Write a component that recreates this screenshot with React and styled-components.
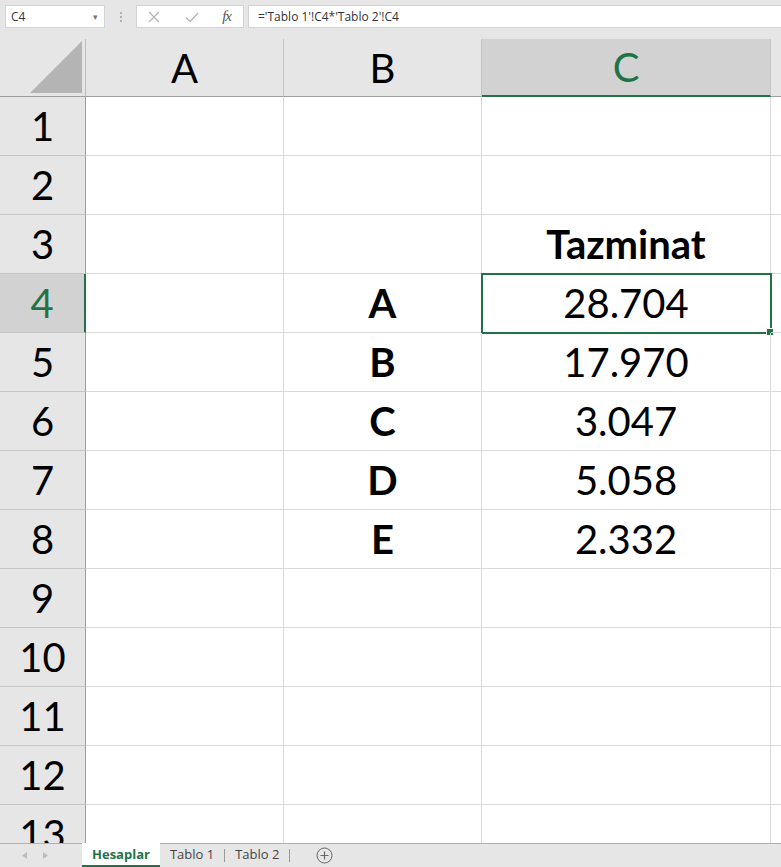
import React from 'react'
import styled, { createGlobalStyle } from 'styled-components'

const GREEN = '#217346'

const columns = ['A', 'B', 'C', 'D']

const rows = [
    ['', '', ''],
    ['', '', ''],
    ['', '', 'Tazminat'],
    ['', 'A', '28.704'],
    ['', 'B', '17.970'],
    ['', 'C', '3.047'],
    ['', 'D', '5.058'],
    ['', 'E', '2.332'],
    ['', '', ''],
    ['', '', ''],
    ['', '', ''],
    ['', '', ''],
    ['', '', ''],
]

const App = () => {
    return (
        <Page>
            <GlobalStyle />
            <FormulaBar>
                <NameBox>
                    <span>C4</span>
                    <Caret>▾</Caret>
                </NameBox>
                <Grip>
                    <i /><i /><i />
                </Grip>
                <FxBox>
                    <svg width="14" height="14" viewBox="0 0 14 14">
                        <path d="M2 2 L12 12 M12 2 L2 12" stroke="#b5b5b5" strokeWidth="1.3" fill="none" />
                    </svg>
                    <svg width="16" height="14" viewBox="0 0 16 14">
                        <path d="M2 7.5 L6 11.5 L14 3" stroke="#b5b5b5" strokeWidth="1.4" fill="none" />
                    </svg>
                    <Fx>fx</Fx>
                </FxBox>
                <FormulaInput>='Tablo 1'!C4*'Tablo 2'!C4</FormulaInput>
            </FormulaBar>

            <SheetArea>
                <Grid>
                    <Corner>
                        <svg width="52" height="52" viewBox="0 0 52 52">
                            <polygon points="52,0 52,52 0,52" fill="#b4b4b4" />
                        </svg>
                    </Corner>
                    {columns.map((c) => (
                        <ColHeader key={c} $active={c === 'C'} $last={c === 'D'}>
                            {c === 'D' ? '' : c}
                        </ColHeader>
                    ))}
                    {rows.map((r, i) => (
                        <React.Fragment key={i}>
                            <RowHeader $active={i === 3}>{i + 1}</RowHeader>
                            <Cell>{r[0]}</Cell>
                            <Cell $bold>{r[1]}</Cell>
                            <Cell $bold={i === 2} $selected={i === 3}>{r[2]}</Cell>
                            <Cell />
                        </React.Fragment>
                    ))}
                </Grid>
            </SheetArea>

            <TabBar>
                <Arrows>
                    <svg width="5" height="7" viewBox="0 0 5 7">
                        <polygon points="5,0 5,7 0,3.5" fill="#bdbdbd" />
                    </svg>
                    <svg width="5" height="7" viewBox="0 0 5 7">
                        <polygon points="0,0 0,7 5,3.5" fill="#bdbdbd" />
                    </svg>
                </Arrows>
                <Tab $active>Hesaplar</Tab>
                <Tab>Tablo 1</Tab>
                <Sep />
                <Tab>Tablo 2</Tab>
                <Sep />
                <AddButton>
                    <svg width="17" height="17" viewBox="0 0 17 17">
                        <circle cx="8.5" cy="8.5" r="7.5" stroke="#666" strokeWidth="1" fill="none" />
                        <path d="M8.5 4.5 V12.5 M4.5 8.5 H12.5" stroke="#666" strokeWidth="1.2" />
                    </svg>
                </AddButton>
            </TabBar>
        </Page>
    )
}

export default App

const GlobalStyle = createGlobalStyle`
    html, body {
        margin: 0;
        padding: 0;
        background: #e6e6e6;
    }
    * {
        box-sizing: border-box;
    }
`
const Page = styled.div`
    width: 781px;
    height: 867px;
    display: flex;
    flex-direction: column;
    overflow: hidden;
    background: #e6e6e6;
    font-family: Lato, "Open Sans", sans-serif;
`
const FormulaBar = styled.div`
    height: 39px;
    flex-shrink: 0;
    display: flex;
    align-items: flex-start;
    padding-top: 5px;
    padding-left: 5px;
    font-family: "Open Sans", "Noto Sans", sans-serif;
    font-size: 12px;
    color: #333;
`
const NameBox = styled.div`
    width: 100px;
    height: 23px;
    background: #fff;
    border: 1px solid #d4d4d4;
    display: flex;
    align-items: center;
    justify-content: space-between;
    padding: 0 6px 0 5px;
`
const Caret = styled.span`
    font-size: 9px;
    color: #777;
`
const Grip = styled.div`
    width: 31px;
    height: 23px;
    display: flex;
    flex-direction: column;
    align-items: center;
    justify-content: center;
    gap: 2px;
    i {
        width: 2px;
        height: 2px;
        background: #b0b0b0;
    }
`
const FxBox = styled.div`
    width: 108px;
    height: 23px;
    background: #fff;
    border: 1px solid #d4d4d4;
    display: flex;
    align-items: center;
    justify-content: space-between;
    padding: 0 12px 0 10px;
`
const Fx = styled.span`
    font-family: "Liberation Serif", serif;
    font-style: italic;
    font-size: 15px;
    color: #555;
    letter-spacing: -1px;
`
const FormulaInput = styled.div`
    flex: 1;
    height: 23px;
    margin-left: 4px;
    background: #fff;
    border: 1px solid #d4d4d4;
    border-right: none;
    display: flex;
    align-items: center;
    padding-left: 9px;
`
const SheetArea = styled.div`
    flex: 1;
    overflow: hidden;
    background: #fff;
    border-bottom: 1px solid #b0b0b0;
`
const Grid = styled.div`
    display: grid;
    grid-template-columns: 86px 198px 198px 289px 120px;
    grid-template-rows: 58px;
    grid-auto-rows: 59px;
    font-size: 40px;
    color: #000;
`
const Corner = styled.div`
    background: #e6e6e6;
    border-right: 1px solid #bdbdbd;
    border-bottom: 1px solid #9e9e9e;
    display: flex;
    align-items: flex-end;
    justify-content: flex-end;
    padding: 0 3px 3px 0;
`
const ColHeader = styled.div`
    background: ${(p) => (p.$active ? '#d2d2d2' : '#e6e6e6')};
    color: ${(p) => (p.$active ? GREEN : '#000')};
    border-right: 1px solid ${(p) => (p.$last ? 'transparent' : '#c6c6c6')};
    border-bottom: ${(p) => (p.$active ? `2px solid ${GREEN}` : '1px solid #9e9e9e')};
    display: flex;
    align-items: center;
    justify-content: center;
`
const RowHeader = styled.div`
    background: ${(p) => (p.$active ? '#d2d2d2' : '#e6e6e6')};
    color: ${(p) => (p.$active ? GREEN : '#000')};
    border-right: ${(p) => (p.$active ? `2px solid ${GREEN}` : '1px solid #9e9e9e')};
    border-bottom: 1px solid #c6c6c6;
    display: flex;
    align-items: center;
    justify-content: center;
`
const Cell = styled.div`
    position: relative;
    border-right: 1px solid #dadada;
    border-bottom: 1px solid #dadada;
    display: flex;
    align-items: center;
    justify-content: center;
    font-weight: ${(p) => (p.$bold ? 700 : 400)};
    ${(p) =>
        p.$selected &&
        `
        outline: 2px solid ${GREEN};
        outline-offset: -1px;
        &::after {
            content: '';
            position: absolute;
            right: -4px;
            bottom: -4px;
            width: 6px;
            height: 6px;
            background: ${GREEN};
            border: 1px solid #fff;
        }
    `}
`
const TabBar = styled.div`
    height: 23px;
    flex-shrink: 0;
    display: flex;
    align-items: stretch;
    background: #e6e6e6;
    font-family: "Open Sans", "Noto Sans", sans-serif;
    font-size: 13px;
`
const Arrows = styled.div`
    width: 82px;
    display: flex;
    align-items: center;
    gap: 16px;
    padding-left: 22px;
`
const Tab = styled.div`
    display: flex;
    align-items: center;
    padding: 0 10px;
    margin-top: -1px;
    background: ${(p) => (p.$active ? '#fff' : 'transparent')};
    color: ${(p) => (p.$active ? GREEN : '#444')};
    font-weight: ${(p) => (p.$active ? 700 : 400)};
    border-bottom: ${(p) => (p.$active ? `2px solid ${GREEN}` : '2px solid transparent')};
`
const Sep = styled.div`
    width: 1px;
    background: #999;
    margin: 5px 0;
`
const AddButton = styled.div`
    display: flex;
    align-items: center;
    padding-left: 26px;
`
